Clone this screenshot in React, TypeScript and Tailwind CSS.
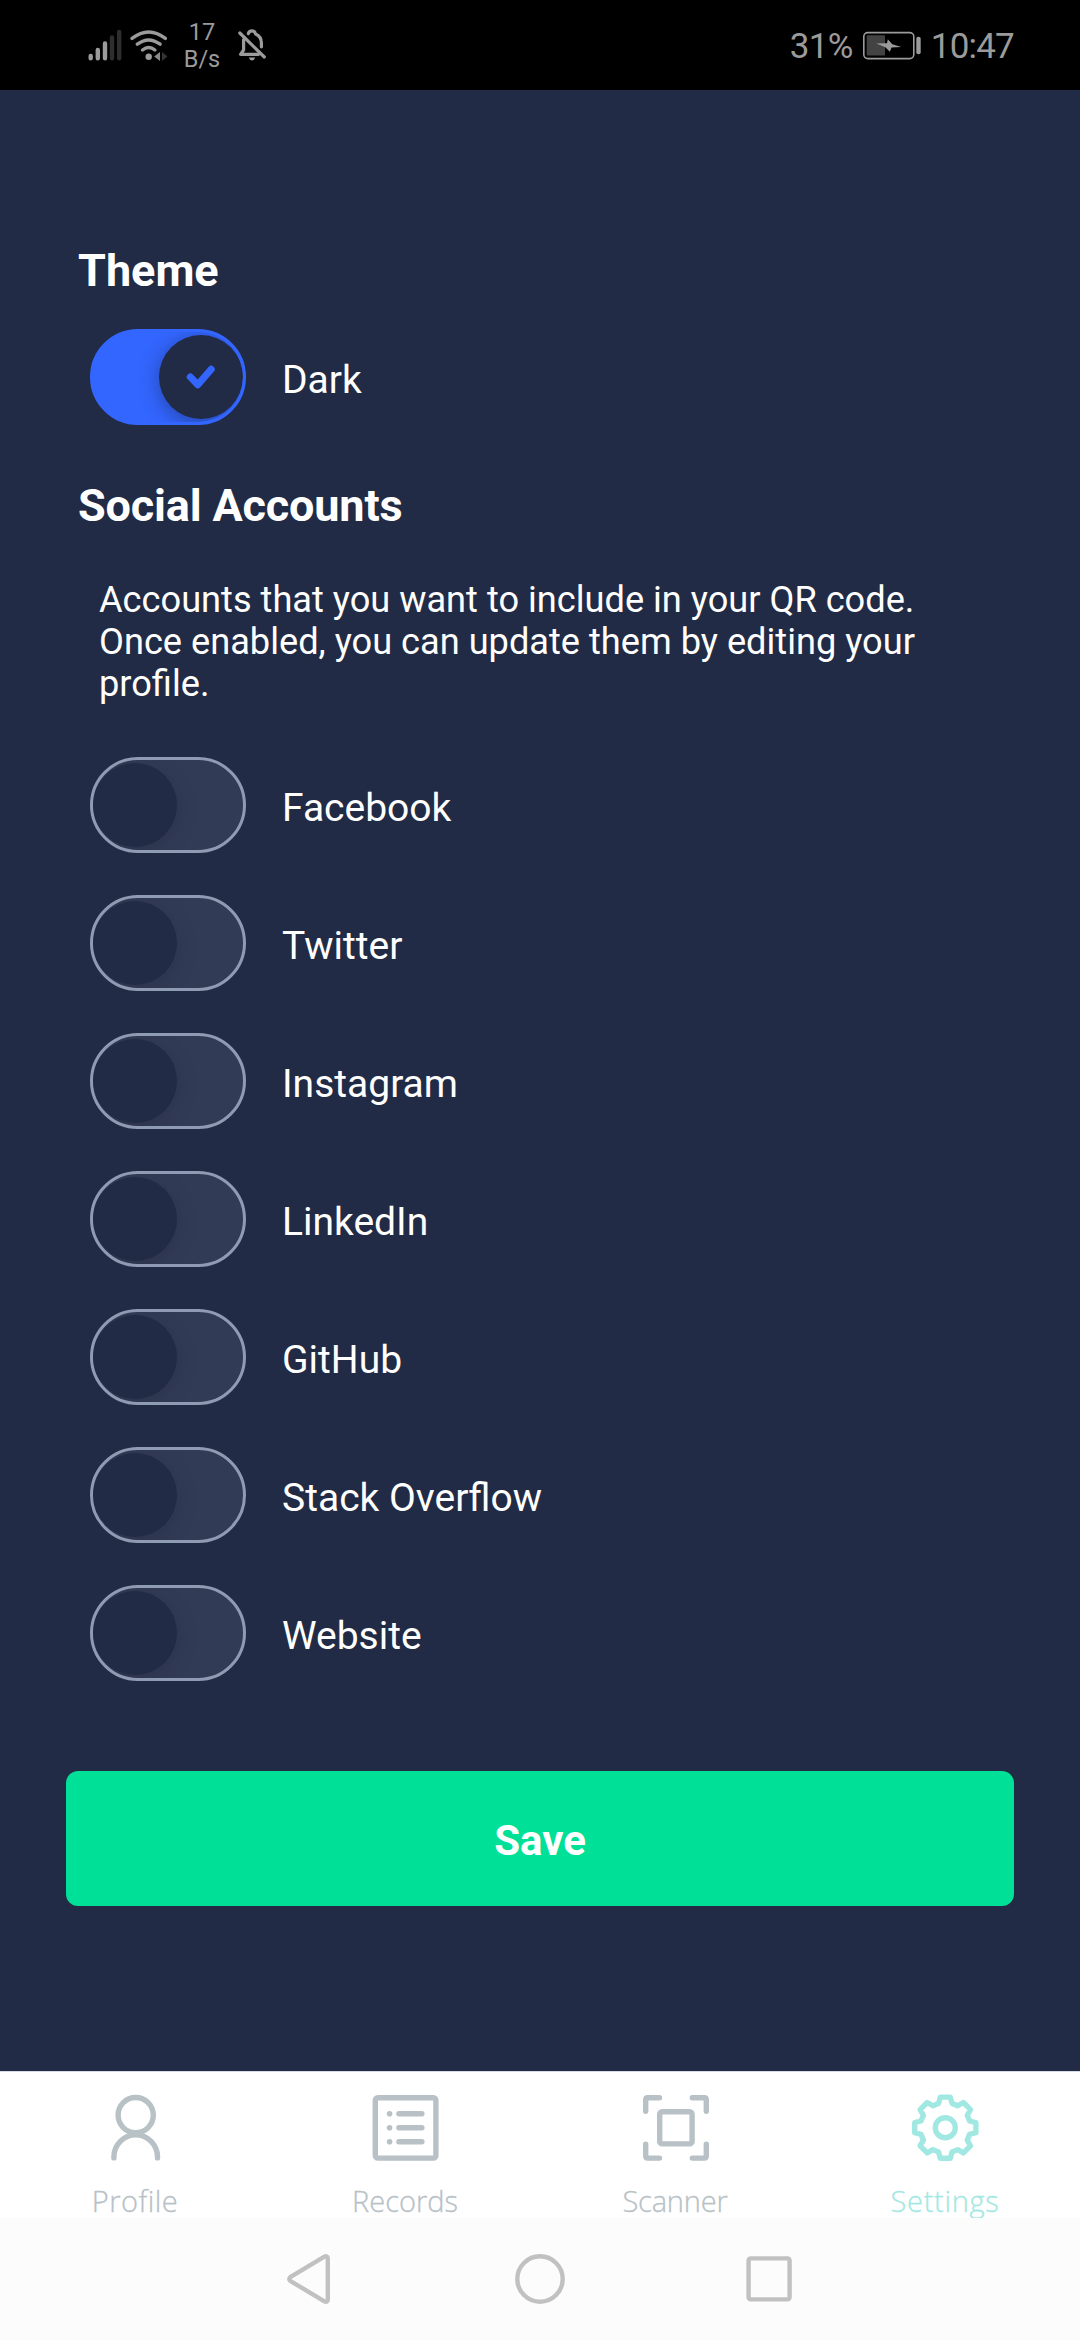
import React from "react";

const accounts = ["Facebook", "Twitter", "Instagram", "LinkedIn", "GitHub", "Stack Overflow", "Website"];

// One tooth of the gear, repeated eight times around the centre.
const tooth = [[-6.7, -24.3], [-5, -30.6], [5, -30.6], [6.7, -24.3]];
const gearPoints = Array.from({ length: 8 }, (_, i) => {
  const a = (i * Math.PI) / 4;
  return tooth
    .map(([x, y]) => `${(x * Math.cos(a) - y * Math.sin(a)).toFixed(2)},${(x * Math.sin(a) + y * Math.cos(a)).toFixed(2)}`)
    .join(" ");
}).join(" ");

function StatusBar() {
  return (
    <header className="flex h-[90px] shrink-0 items-start justify-between bg-black text-[#9b9b9b]">
      <div className="flex items-start pl-[86px]">
        <svg className="h-[90px] w-[37px]" viewBox="86 0 37 90" fill="none" strokeWidth="4.4" strokeLinecap="round">
          <g stroke="#9b9b9b">
            <path d="M90.7 56v2.2M97.8 50v8.2M105 43.4v14.8" />
          </g>
          <g stroke="#2e2e2e">
            <path d="M112 37.4v20.8M119.2 32v26.2" />
          </g>
        </svg>
        <svg className="h-[90px] w-[48px]" viewBox="123 0 48 90" fill="none" stroke="#9b9b9b" strokeWidth="3.4" strokeLinecap="round">
          <path d="M132 38.4Q148.7 25.4 165.4 38.4" />
          <path d="M137.3 44.2Q148.7 35.6 160.1 44.2" />
          <path d="M142.5 50Q148.7 45 154.9 50" />
          <circle cx="148.7" cy="56.7" r="3.2" fill="#9b9b9b" stroke="none" />
          <path d="M160 52v9L154.2 56.5z" fill="#8a8a8a" stroke="none" />
          <path d="M162 52v9L167.5 56.5z" fill="#333" stroke="none" />
        </svg>
        <div className="mt-[19px] flex w-[62px] flex-col items-center text-[23.5px] leading-[27px]">
          <span>17</span>
          <span>B/s</span>
        </div>
        <svg className="h-[90px] w-[36px]" viewBox="233 0 36 90" fill="none" stroke="#9b9b9b" strokeWidth="3.2" strokeLinecap="round" strokeLinejoin="round">
          <path d="M243.6 39.5V50L240.6 54.3H258.5" />
          <path d="M248.3 33.6Q249 30.9 252 30.9T255.6 34Q261.4 36.5 261.4 43V46.8" />
          <path d="M239.8 33L264.3 57" />
          <path d="M248.8 57.6h6.4q-.8 2.8-3.2 2.8t-3.2-2.8z" fill="#9b9b9b" stroke="none" />
        </svg>
      </div>
      <div className="flex items-start pr-[66px] text-[35px] leading-[41px]">
        <span className="mt-[26px] tracking-[-0.6px]">31%</span>
        <svg className="mx-2 h-[90px] w-[62px]" viewBox="860 0 62 90" fill="none">
          <rect x="862.8" y="32.6" width="50" height="26" rx="4" stroke="#9b9b9b" strokeWidth="1.6" />
          <rect x="865.7" y="35.3" width="18.3" height="20.3" rx="1" fill="#434343" />
          <rect x="915.3" y="36.7" width="4.4" height="17.6" rx="2" fill="#9b9b9b" />
          <path d="M875.3 43.4L886 43.2L886.8 39.3L891.3 44.2L900.3 47L890.6 47.6L888.8 51.8L884.3 47.2Z" fill="#9b9b9b" />
        </svg>
        <span className="mt-[26px] tracking-[-0.8px]">10:47</span>
      </div>
    </header>
  );
}

function Toggle({ on = false }: { on?: boolean }) {
  return on ? (
    <span className="flex h-24 w-[156px] shrink-0 items-center justify-end overflow-hidden rounded-full border-[3px] border-[#3366ff] bg-[#3366ff]">
      <span className="flex size-[84px] items-center justify-center rounded-full bg-[#222b45] shadow-[0_4px_20px_rgba(20,28,60,0.45)]">
        <svg className="h-[24px] w-[30px]" viewBox="0 0 30 24" fill="none" stroke="#3366ff" strokeWidth="7" strokeLinecap="round" strokeLinejoin="round">
          <path d="M4.3 11.9L11.8 19.7L25.2 4.3" />
        </svg>
      </span>
    </span>
  ) : (
    <span className="flex h-24 w-[156px] shrink-0 items-center overflow-hidden rounded-full border-[3px] border-[#8f9bb3] bg-[#323b56]">
      <span className="size-[84px] rounded-full bg-[#222b45] shadow-[0_4px_18px_rgba(34,38,60,0.4)]" />
    </span>
  );
}

function Row({ label, on }: { label: string; on?: boolean }) {
  return (
    <label className="flex h-24 items-center gap-9">
      <Toggle on={on} />
      <span className="pt-[6px] text-[39px] leading-[46px]">{label}</span>
    </label>
  );
}

function Tab({ label, spacing, active, children }: { label: string; spacing: string; active?: boolean; children: React.ReactNode }) {
  return (
    <div className={active ? "flex flex-1 flex-col items-center text-[#a2e8e2]" : "flex flex-1 flex-col items-center text-[#b7c1c6]"}>
      <svg className="mt-[20px] size-[72px] shrink-0" viewBox="-36.3 -35.7 72 72" fill="none" stroke="currentColor" strokeWidth="5.4" strokeLinecap="round" strokeLinejoin="round">
        {children}
      </svg>
      <span className={`mt-[20px] shrink-0 font-['Open_Sans'] text-[29px] leading-[34px] font-light [-webkit-text-stroke:0.3px_currentColor] ${spacing}`}>{label}</span>
    </div>
  );
}

export default function App() {
  return (
    <div className="flex h-[2340px] w-[1080px] flex-col overflow-hidden bg-[#222b45] font-[Roboto,sans-serif] text-white">
      <StatusBar />
      <main className="flex flex-1 flex-col px-[66px] pt-[154px]">
        <h2 className="ml-3 text-[45px] leading-[54px] font-bold">Theme</h2>
        <div className="mt-[31px] ml-6">
          <Row label="Dark" on />
        </div>
        <h2 className="mt-[54px] ml-3 text-[45px] leading-[54px] font-bold tracking-[-0.17px]">Social Accounts</h2>
        <p className="mt-[46px] ml-[33px] w-[850px] text-[36.2px] leading-[42px]">
          Accounts that you want to include in your QR code. Once enabled, you can update them by editing your profile.
        </p>
        <div className="mt-[52px] ml-6 flex flex-col gap-[42px]">
          {accounts.map((name) => (
            <Row key={name} label={name} />
          ))}
        </div>
        <button className="mt-[90px] flex h-[135px] items-center justify-center rounded-xl bg-[#00e096] pt-[5px] text-[42px] leading-[50px] font-bold">
          Save
        </button>
      </main>
      <nav className="flex h-[147px] shrink-0 border-t border-[#d5dae6] bg-white">
        <Tab label="Profile" spacing="tracking-[0.5px]">
          <circle cx="0.4" cy="-12.6" r="17.6" />
          <path d="M-21.4 30.2V29a21.8 21.8 0 0 1 43.6 0V30.2" />
        </Tab>
        <Tab label="Records" spacing="tracking-[0px]">
          <rect x="-30" y="-30" width="60.6" height="60.4" rx="2.5" />
          <path d="M-6.4 -14H16.6M-6.4 0H16.6M-6.4 14H16.6" />
          <g fill="currentColor" stroke="none">
            <circle cx="-15.7" cy="-14" r="2.8" />
            <circle cx="-15.7" cy="0" r="2.8" />
            <circle cx="-15.7" cy="14" r="2.8" />
          </g>
        </Tab>
        <Tab label="Scanner" spacing="tracking-[-0.2px]">
          <path d="M-29.6 -16.4V-28q0-2 2-2H-15.8M17 -30H29q2 0 2 2V-16.4M31 16.6V28.4q0 2-2 2H17M-15.8 30.4H-27.6q-2 0-2-2V16.6" />
          <rect x="-15.6" y="-16" width="32.4" height="32.2" rx="2.5" />
        </Tab>
        <Tab label="Settings" spacing="tracking-[0.7px]" active>
          <polygon points={gearPoints} strokeLinejoin="round" />
          <circle cx="0" cy="0" r="10" />
        </Tab>
      </nav>
      <footer className="flex h-[122px] shrink-0 items-center justify-center bg-[#fcfcfc]">
        <svg className="h-[60px] w-[520px]" viewBox="280 2249 520 60" fill="none" stroke="#c1c1c1" strokeWidth="4.4" strokeLinejoin="round">
          <path d="M290.2 2277.2L324 2256.8Q327.8 2255.2 327.8 2258.6V2299.4Q327.8 2302.8 324 2301.2L290.2 2280.8Q288.6 2279 290.2 2277.2Z" />
          <circle cx="540" cy="2279" r="22.7" />
          <rect x="748.6" y="2258.4" width="41" height="41" rx="2" />
        </svg>
      </footer>
    </div>
  );
}
